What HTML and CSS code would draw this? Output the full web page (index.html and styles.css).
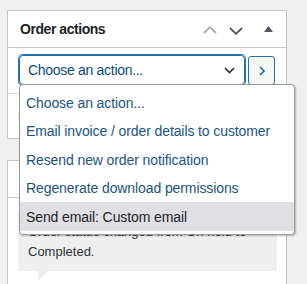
FILE: index.html
```html
<!DOCTYPE html>
<html lang="en">
<head>
<meta charset="utf-8">
<title>Order actions</title>
<link rel="stylesheet" href="styles.css">
</head>
<body>
<div class="wrap">
  <div class="postbox">
    <div class="postbox-header">
      <h2 class="hndle">Order actions</h2>
      <div class="handle-actions">
        <span class="handle-btn handle-up">
          <svg width="14" height="8" viewBox="0 0 14 8"><polyline points="1,7 7,1.2 13,7" fill="none" stroke="currentColor" stroke-width="1.8"/></svg>
        </span>
        <span class="handle-btn handle-down">
          <svg width="14" height="8" viewBox="0 0 14 8"><polyline points="1,1 7,6.8 13,1" fill="none" stroke="currentColor" stroke-width="1.8"/></svg>
        </span>
        <span class="handle-btn handle-toggle">
          <svg width="9" height="6" viewBox="0 0 9 6"><polygon points="0,6 4.5,0 9,6" fill="currentColor"/></svg>
        </span>
      </div>
    </div>
    <div class="inside">
      <div class="action-row">
        <div class="select">
          <span class="select-text">Choose an action...</span>
          <svg class="select-arrow" width="11" height="7" viewBox="0 0 11 7"><polyline points="1,1 5.5,5.6 10,1" fill="none" stroke="currentColor" stroke-width="1.7"/></svg>
        </div>
        <button class="go-btn" type="button">
          <svg width="6" height="10" viewBox="0 0 6 10"><polyline points="1,1 5,5 1,9" fill="none" stroke="currentColor" stroke-width="1.7"/></svg>
        </button>
      </div>
    </div>
    <div class="actions-footer">
      <a class="trash" href="#">Move to Trash</a>
    </div>
  </div>

  <div class="postbox postbox-notes">
    <div class="postbox-header">
      <h2 class="hndle">Order notes</h2>
    </div>
    <div class="notes-inside">
      <div class="note">
        <p class="note-content">Order status changed from On hold to Completed.</p>
      </div>
    </div>
  </div>

  <ul class="dropdown">
    <li class="option">Choose an action...</li>
    <li class="option">Email invoice / order details to customer</li>
    <li class="option">Resend new order notification</li>
    <li class="option">Regenerate download permissions</li>
    <li class="option option-hover">Send email: Custom email</li>
  </ul>
</div>
</body>
</html>
```

FILE: styles.css
```css
html, body {
  margin: 0;
  padding: 0;
  height: 284px;
  overflow: hidden;
}

body {
  background: #f0f0f1;
  font-family: "Liberation Sans", Arial, sans-serif;
  color: #1d2327;
}

.wrap {
  position: relative;
  height: 284px;
  overflow: hidden;
  padding: 10px 0 0 7px;
  box-sizing: border-box;
}

.postbox {
  width: 280px;
  box-sizing: border-box;
  background: #fff;
  border: 1px solid #c3c4c7;
  margin-bottom: 21px;
}

.postbox-header {
  display: flex;
  align-items: center;
  height: 36px;
  border-bottom: 1px solid #c3c4c7;
}

.hndle {
  flex: 1;
  margin: 0;
  padding-left: 12px;
  font-size: 14px;
  font-weight: 700;
  letter-spacing: -0.45px;
  color: #1d2327;
}

.handle-actions {
  display: flex;
  height: 36px;
}

.handle-btn {
  display: flex;
  align-items: center;
  justify-content: center;
  height: 36px;
  width: 26px;
}

.handle-up {
  color: #a7aaad;
  padding-top: 1px;
}

.handle-down {
  color: #50575e;
  padding-top: 2px;
}

.handle-toggle {
  width: 36px;
  color: #50575e;
  padding-left: 1px;
  padding-bottom: 1px;
}

.inside {
  padding: 7px 0 8px 11px;
}

.action-row {
  display: flex;
  align-items: flex-start;
  gap: 3px;
}

.select {
  box-sizing: border-box;
  width: 226px;
  height: 30px;
  display: flex;
  align-items: center;
  padding: 0 9px 0 8px;
  border: 1px solid #2271b1;
  border-radius: 4px;
  box-shadow: 0 0 0 1px #2271b1;
  color: #0a4b78;
  font-size: 14px;
}

.select-text {
  flex: 1;
  letter-spacing: -0.3px;
}

.select-arrow {
  color: #2c3338;
  margin-top: 1px;
}

.go-btn {
  box-sizing: border-box;
  width: 27px;
  height: 29px;
  margin-top: 1px;
  padding: 0;
  display: flex;
  align-items: center;
  justify-content: center;
  background: #f6f7f7;
  border: 1px solid #2271b1;
  border-radius: 3px;
  color: #2271b1;
}

.actions-footer {
  height: 44px;
  border-top: 1px solid #dcdcde;
  display: flex;
  align-items: center;
  padding-left: 10px;
}

.trash {
  color: #b32d2e;
  font-size: 13px;
  text-decoration: none;
}

.postbox-notes {
  height: 140px;
}

.notes-inside {
  padding: 13px 9px 0 10px;
}

.note {
  position: relative;
  background: #efefef;
}

.note::after {
  content: "";
  position: absolute;
  left: 20px;
  bottom: -10px;
  width: 0;
  height: 0;
  border-style: solid;
  border-width: 10px 10px 0 0;
  border-color: #efefef transparent transparent transparent;
}

.note-content {
  margin: 0;
  padding: 11px 10px 10px;
  font-size: 13px;
  line-height: 19.5px;
  color: #2c3338;
}

.dropdown {
  position: absolute;
  left: 19px;
  top: 84px;
  width: 276px;
  box-sizing: border-box;
  margin: 0;
  padding: 3px 0;
  list-style: none;
  background: #fff;
  border: 1px solid #9a9a9a;
  border-radius: 4px;
  box-shadow: 1px 1px 2px rgba(0, 0, 0, 0.25);
}

.option {
  box-sizing: border-box;
  height: 28.5px;
  display: flex;
  align-items: center;
  padding: 1px 0 0 6px;
  font-size: 14px;
  color: #1a5482;
  letter-spacing: -0.1px;
  white-space: nowrap;
}

.option-hover {
  background: #e0dfe4;
  color: #1d2327;
}
```
